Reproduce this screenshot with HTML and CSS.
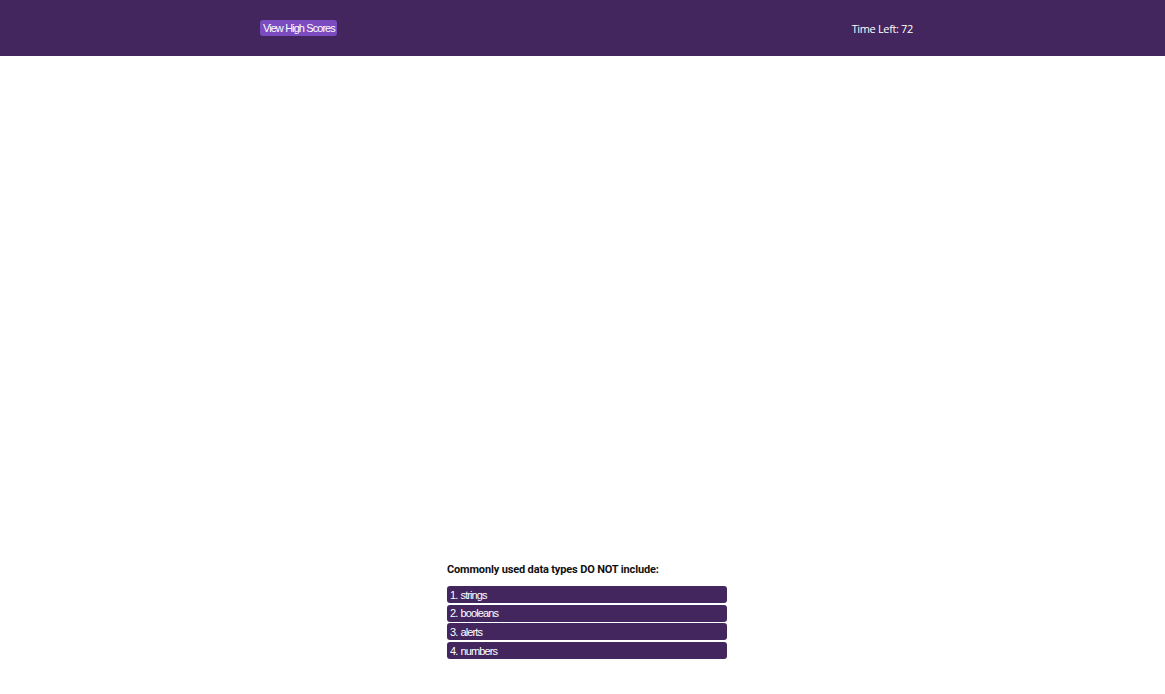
FILE: index.html
```html
<!DOCTYPE html>
<html lang="en">
<head>
<meta charset="utf-8">
<title>Code Quiz</title>
<link rel="stylesheet" href="styles.css">
</head>
<body>
<header class="topbar">
  <button class="scores-btn">View High Scores</button>
  <div class="timer">Time Left: 72</div>
</header>
<main class="quiz">
  <h2 class="question">Commonly used data types DO NOT include:</h2>
  <div class="answers">
    <button class="answer">1. strings</button>
    <button class="answer">2. booleans</button>
    <button class="answer">3. alerts</button>
    <button class="answer">4. numbers</button>
  </div>
</main>
</body>
</html>
```

FILE: styles.css
```css
html, body {
  margin: 0;
  padding: 0;
  background: #ffffff;
}

.topbar {
  height: 56px;
  background: #43265e;
  display: flex;
  align-items: center;
  justify-content: space-between;
  padding: 0 252px 0 260px;
  box-sizing: border-box;
}

.scores-btn {
  background: #7b4cbf;
  color: #ffffff;
  border: none;
  border-radius: 3px;
  font-family: "Liberation Sans", Arial, sans-serif;
  font-size: 11px;
  letter-spacing: -0.95px;
  word-spacing: 0.2px;
  height: 16px;
  padding: 0 2px 0 3px;
  line-height: 16px;
  cursor: pointer;
}

.timer {
  color: #ffffff;
  font-family: "Open Sans", sans-serif;
  font-size: 11px;
  letter-spacing: -0.35px;
}

.quiz {
  width: 280px;
  margin: 507px 0 0 447px;
}

.question {
  font-family: Roboto, sans-serif;
  font-weight: bold;
  font-size: 11px;
  letter-spacing: -0.15px;
  color: #111111;
  margin: 0 0 9px 0;
  line-height: 14px;
}

.answers {
  display: flex;
  flex-direction: column;
  gap: 1.7px;
}

.answer {
  background: #43265e;
  color: #ffffff;
  border: none;
  border-radius: 3px;
  height: 17px;
  text-align: left;
  padding: 0 3px;
  font-family: "Liberation Sans", Arial, sans-serif;
  font-size: 11px;
  letter-spacing: -0.9px;
  word-spacing: 1px;
  cursor: pointer;
}
```
